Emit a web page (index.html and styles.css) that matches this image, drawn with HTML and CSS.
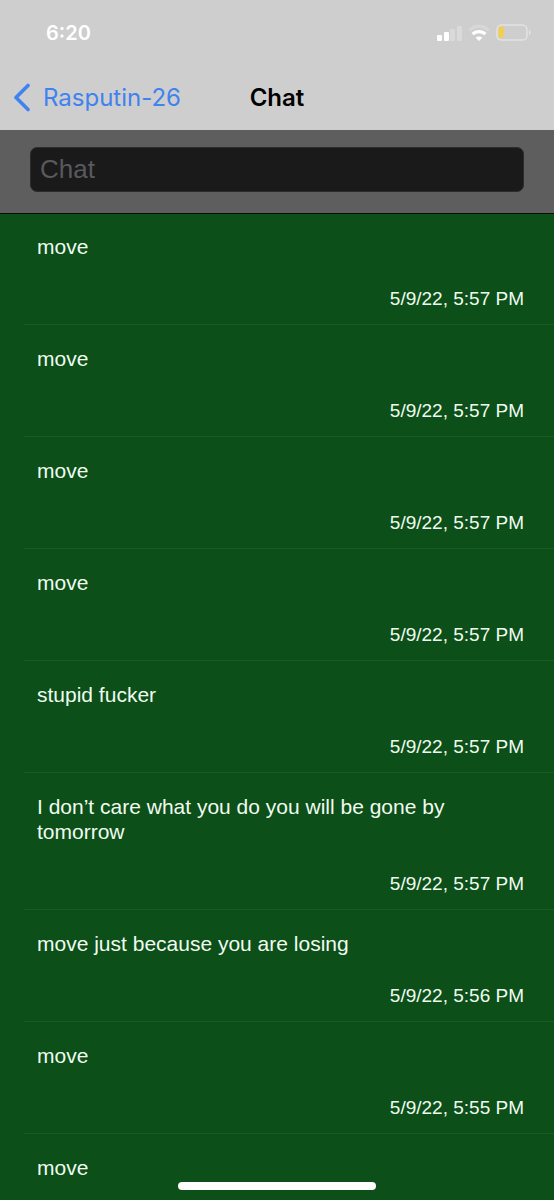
FILE: index.html
```html
<!DOCTYPE html>
<html lang="en">
<head>
<meta charset="utf-8">
<meta name="viewport" content="width=device-width, initial-scale=1">
<title>Chat</title>
<link rel="stylesheet" href="styles.css">
</head>
<body>
<div class="screen">
  <header class="header">
    <div class="status">
      <time class="clock">6:20</time>
      <div class="indicators">
        <svg class="signal" width="26" height="18" viewBox="0 0 26 18" aria-hidden="true">
          <rect x="1" y="11" width="5" height="6" rx="1" fill="#fff"/>
          <rect x="8" y="8" width="5" height="9" rx="1" fill="#fff"/>
          <rect x="14" y="5" width="5" height="12" rx="1" fill="#dadada"/>
          <rect x="21" y="2" width="5" height="15" rx="1" fill="#dadada"/>
        </svg>
        <svg class="wifi" width="22" height="18" viewBox="0 0 22 18" fill="none" aria-hidden="true">
          <path d="M1.5 6.2C6.8.9 15.2.9 20.5 6.2" stroke="#d8d8d8" stroke-width="3"/>
          <path d="M4.6 10.2c3.5-3.5 9.3-3.5 12.8 0" stroke="#fff" stroke-width="3.2"/>
          <path d="M11 17 7.7 13.8c1.8-1.7 4.8-1.7 6.6 0Z" fill="#fff"/>
        </svg>
        <svg class="battery" width="36" height="18" viewBox="0 0 36 18" fill="none" aria-hidden="true">
          <rect x="1" y="1" width="30" height="15" rx="4.5" stroke="#e2e2e2" stroke-width="1.5"/>
          <path d="M8 2.8H5.6A3 3 0 0 0 2.7 5.7v5.6a3 3 0 0 0 2.9 2.9H7Z" fill="#f6cf45"/>
          <path d="M33 6c2.3.8 2.3 4.4 0 5.2Z" fill="#e2e2e2"/>
        </svg>
      </div>
    </div>
    <nav class="nav">
      <a class="back" href="#">
        <svg width="18" height="30" viewBox="0 0 18 30" fill="none" aria-hidden="true">
          <path d="M16 3.5 4 15.5 16 27.5" stroke="#3f82f0" stroke-width="3.6" stroke-linecap="round" stroke-linejoin="round"/>
        </svg>
        <span>Rasputin-26</span>
      </a>
      <h1 class="title">Chat</h1>
    </nav>
  </header>
  <form class="compose">
    <input class="field" type="text" placeholder="Chat" aria-label="Chat">
  </form>
  <main>
    <ul class="messages">
      <li class="message"><p class="text">move</p><time class="date">5/9/22, 5:57 PM</time></li>
      <li class="message"><p class="text">move</p><time class="date">5/9/22, 5:57 PM</time></li>
      <li class="message"><p class="text">move</p><time class="date">5/9/22, 5:57 PM</time></li>
      <li class="message"><p class="text">move</p><time class="date">5/9/22, 5:57 PM</time></li>
      <li class="message"><p class="text">stupid fucker</p><time class="date">5/9/22, 5:57 PM</time></li>
      <li class="message"><p class="text">I don’t care what you do you will be gone by tomorrow</p><time class="date">5/9/22, 5:57 PM</time></li>
      <li class="message"><p class="text">move just because you are losing</p><time class="date">5/9/22, 5:56 PM</time></li>
      <li class="message"><p class="text">move</p><time class="date">5/9/22, 5:55 PM</time></li>
      <li class="message"><p class="text">move</p></li>
    </ul>
  </main>
  <div class="home-indicator"></div>
</div>
</body>
</html>
```
FILE: styles.css
```css
* { box-sizing: border-box; }

body {
  margin: 0;
  background: #0c4f19;
  color: #f0fbf0;
  font-family: "Liberation Sans", Arial, sans-serif;
}

.screen {
  min-height: 100vh;
}

.header {
  background: #cecece;
  font-family: Inter, sans-serif;
}

.status {
  display: flex;
  align-items: center;
  justify-content: space-between;
  height: 66px;
  padding: 0 22px 0 46px;
}

.clock {
  color: #fff;
  font-size: 20px;
  font-weight: 600;
}

.indicators {
  display: flex;
  align-items: center;
  gap: 6px;
}

.nav {
  display: grid;
  grid-template-columns: 1fr auto 1fr;
  align-items: center;
  height: 64px;
  padding: 0 12px 2px;
}

.back {
  display: flex;
  align-items: center;
  gap: 13px;
  color: #3f82f0;
  font-size: 24px;
  text-decoration: none;
}

.title {
  margin: 0;
  color: #000;
  font-size: 24px;
  font-weight: 600;
}

.compose {
  padding: 17px 30px 21px;
  border-bottom: 1px solid #0a0f0a;
  background: #5e5e5e;
}

.field {
  display: block;
  width: 100%;
  height: 45px;
  padding: 0 9px;
  border: 1px solid #2c2c2c;
  border-radius: 7px;
  background: #1a1a1a;
  color: #fff;
  font-family: inherit;
  font-size: 26px;
}

.field::placeholder {
  color: #59595d;
  opacity: 1;
}

.messages {
  margin: 0;
  padding: 0 0 0 24px;
  list-style: none;
}

.message {
  display: flex;
  flex-direction: column;
  gap: 27px;
  padding: 21px 30px 12px 13px;
  border-bottom: 1px solid #1c5827;
}

.message:first-child { padding-top: 20px; }

.message:last-child { border-bottom: 0; }

.text {
  margin: 0;
  font-size: 21px;
  line-height: 25px;
}

.date {
  align-self: flex-end;
  font-size: 19px;
  line-height: 26px;
}

.home-indicator {
  position: fixed;
  bottom: 10px;
  left: 50%;
  width: 198px;
  height: 8px;
  margin-left: -99px;
  border-radius: 4px;
  background: #fff;
}
```
